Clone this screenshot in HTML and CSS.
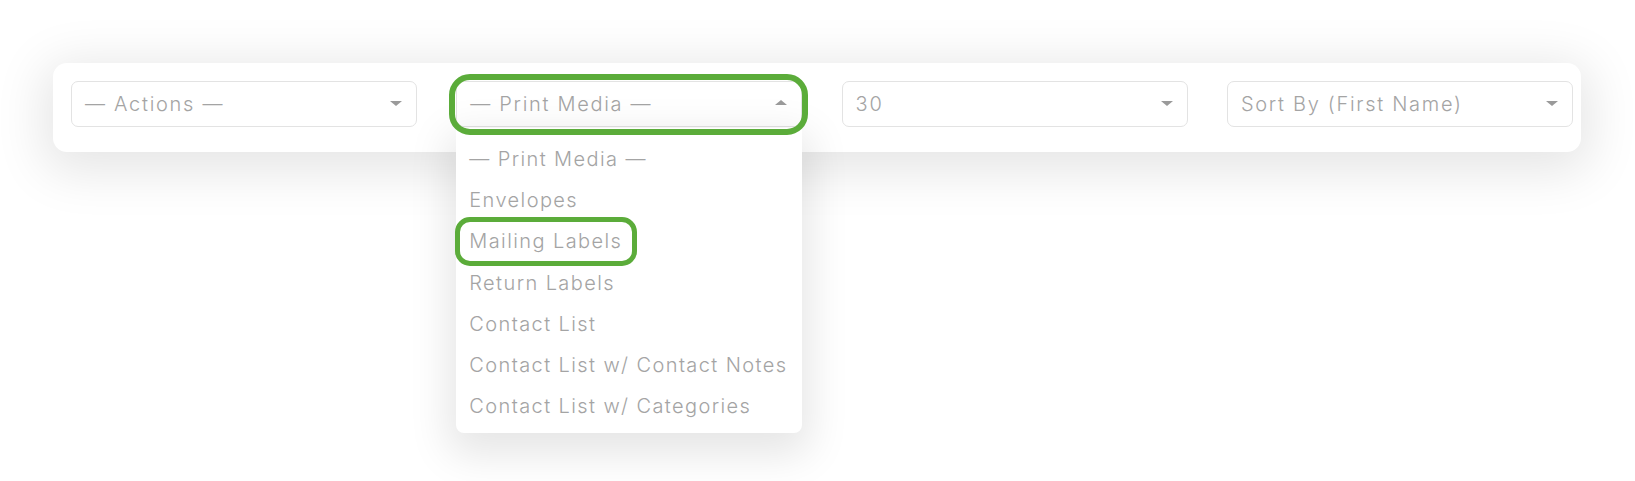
FILE: index.html
```html
<!DOCTYPE html>
<html lang="en">
<head>
<meta charset="utf-8">
<title>Print Media</title>
<link rel="stylesheet" href="styles.css">
</head>
<body>
<div class="page">
  <div class="panel">
    <div class="select">
      <span class="value">— Actions —</span>
      <span class="caret down"></span>
    </div>
    <div class="select open">
      <span class="value">— Print Media —</span>
      <span class="caret up"></span>
      <ul class="menu">
        <li class="item">— Print Media —</li>
        <li class="item">Envelopes</li>
        <li class="item marked">Mailing Labels</li>
        <li class="item">Return Labels</li>
        <li class="item">Contact List</li>
        <li class="item">Contact List w/ Contact Notes</li>
        <li class="item">Contact List w/ Categories</li>
      </ul>
    </div>
    <div class="select">
      <span class="value">30</span>
      <span class="caret down"></span>
    </div>
    <div class="select">
      <span class="value">Sort By (First Name)</span>
      <span class="caret down"></span>
    </div>
  </div>
</div>
</body>
</html>
```
FILE: styles.css
```css
html, body {
  margin: 0;
  padding: 0;
  background: #ffffff;
}

body {
  font-family: Inter, "Open Sans", "DejaVu Sans", sans-serif;
  font-weight: 300;
  color: #a4a4a4;
}

.page {
  min-height: 481px;
  box-sizing: border-box;
  padding: 63px 0 0 53px;
}

.panel {
  width: 1528px;
  height: 89px;
  box-sizing: border-box;
  padding: 18px 8px 0 18px;
  background: #ffffff;
  border-radius: 14px;
  box-shadow: 0 10px 50px 10px rgba(0, 0, 0, 0.1);
  display: grid;
  grid-template-columns: repeat(4, 346px);
  column-gap: 39.3px;
  align-items: start;
}

.select {
  position: relative;
  height: 46px;
  box-sizing: border-box;
  border: 1px solid #e3e3e3;
  border-radius: 7px;
  padding: 0 14px 0 13px;
  display: flex;
  align-items: center;
  justify-content: space-between;
  background: #ffffff;
}

.value {
  font-size: 20px;
  letter-spacing: 1.7px;
  white-space: nowrap;
}

.caret {
  width: 0;
  height: 0;
  border-left: 6px solid transparent;
  border-right: 6px solid transparent;
}

.caret.down {
  border-top: 5px solid #9a9a9a;
  margin-top: -2px;
}

.caret.up {
  border-bottom: 5px solid #9a9a9a;
  margin-top: -3px;
}

.select.open {
  z-index: 2;
}

.select.open::after {
  content: "";
  position: absolute;
  top: -8px;
  left: -8px;
  right: -7px;
  bottom: -9px;
  border: 6px solid #5bac3a;
  border-radius: 21px;
  pointer-events: none;
}

.menu {
  position: absolute;
  top: 46px;
  left: -1px;
  width: 346px;
  box-sizing: border-box;
  margin: 0;
  padding: 10px 0 6px 0;
  list-style: none;
  background: #ffffff;
  border-radius: 0 0 8px 8px;
  box-shadow: 0 14px 40px 8px rgba(0, 0, 0, 0.1);
}

.item {
  position: relative;
  height: 41.3px;
  display: flex;
  align-items: center;
  padding-left: 13px;
  font-size: 20px;
  letter-spacing: 1.4px;
  white-space: nowrap;
}

.item.marked::after {
  content: "";
  position: absolute;
  left: -1px;
  top: -4px;
  width: 182px;
  height: 49px;
  box-sizing: border-box;
  border: 5px solid #5bac3a;
  border-radius: 15px;
}
```
